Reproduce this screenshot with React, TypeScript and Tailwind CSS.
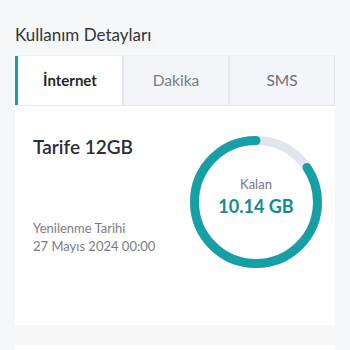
import React from "react";

export default function App() {
  const r = 61.5;
  const C = 2 * Math.PI * r;
  const used = 1 - 10.14 / 12;
  return (
    <div className="w-[350px] h-[350px] overflow-hidden bg-[#f6f7f9] pt-[22px] px-[15px]" style={{ fontFamily: "Lato, 'Noto Sans', sans-serif" }}>
      <div className="text-[17px] leading-[26px] text-[#333438] h-[33px]">Kullanım Detayları</div>
      <div className="flex h-[51px] bg-[#e6e8ec] gap-[2px] border border-[#e6e8ec] border-l-0 border-t-[#eef0f3]">
        <div className="flex-1 bg-white border-l-[3px] border-[#16a0a5] flex items-center justify-center text-[15px] font-bold text-[#26272b]">İnternet</div>
        <div className="flex-1 bg-[#f4f5f8] flex items-center justify-center text-[15.5px] text-[#7a7b80]">Dakika</div>
        <div className="flex-1 bg-[#f4f5f8] flex items-center justify-center text-[15.5px] text-[#6f7075]">SMS</div>
      </div>
      <div className="bg-white h-[219px] flex justify-between pl-[18px] pr-[13px] pt-[29px]">
        <div className="flex flex-col">
          <div className="text-[19px] leading-[26px] font-semibold text-[#2c2e35] mt-[-1px]">Tarife 12GB</div>
          <div className="mt-[59px] text-[13px] leading-[18px] text-[#7b7c82]">Yenilenme Tarihi</div>
          <div className="text-[13px] leading-[18px] text-[#7b7c82]">27 Mayıs 2024 00:00</div>
        </div>
        <div className="relative w-[132px] h-[132px] mt-[1px]">
          <svg width="132" height="132" viewBox="0 0 132 132" className="absolute inset-0">
            <circle cx="66" cy="66" r={r} fill="none" stroke="#e3e5ee" strokeWidth="9" />
            <circle
              cx="66"
              cy="66"
              r={r}
              fill="none"
              stroke="#16a0a5"
              strokeWidth="9"
              strokeLinecap="round"
              strokeDasharray={`${(1 - used) * C} ${C}`}
              strokeDashoffset={-used * C}
              transform="rotate(-90 66 66)"
            />
          </svg>
          <div className="absolute inset-0 flex flex-col items-center justify-center">
            <div className="text-[13px] leading-[17px] text-[#76777c] mt-[-11px]">Kalan</div>
            <div className="text-[18px] leading-[24px] font-bold text-[#138b90] mt-[1px]">10.14 GB</div>
          </div>
        </div>
      </div>
      <div className="bg-white h-[40px] mt-[20px]" />
    </div>
  );
}
